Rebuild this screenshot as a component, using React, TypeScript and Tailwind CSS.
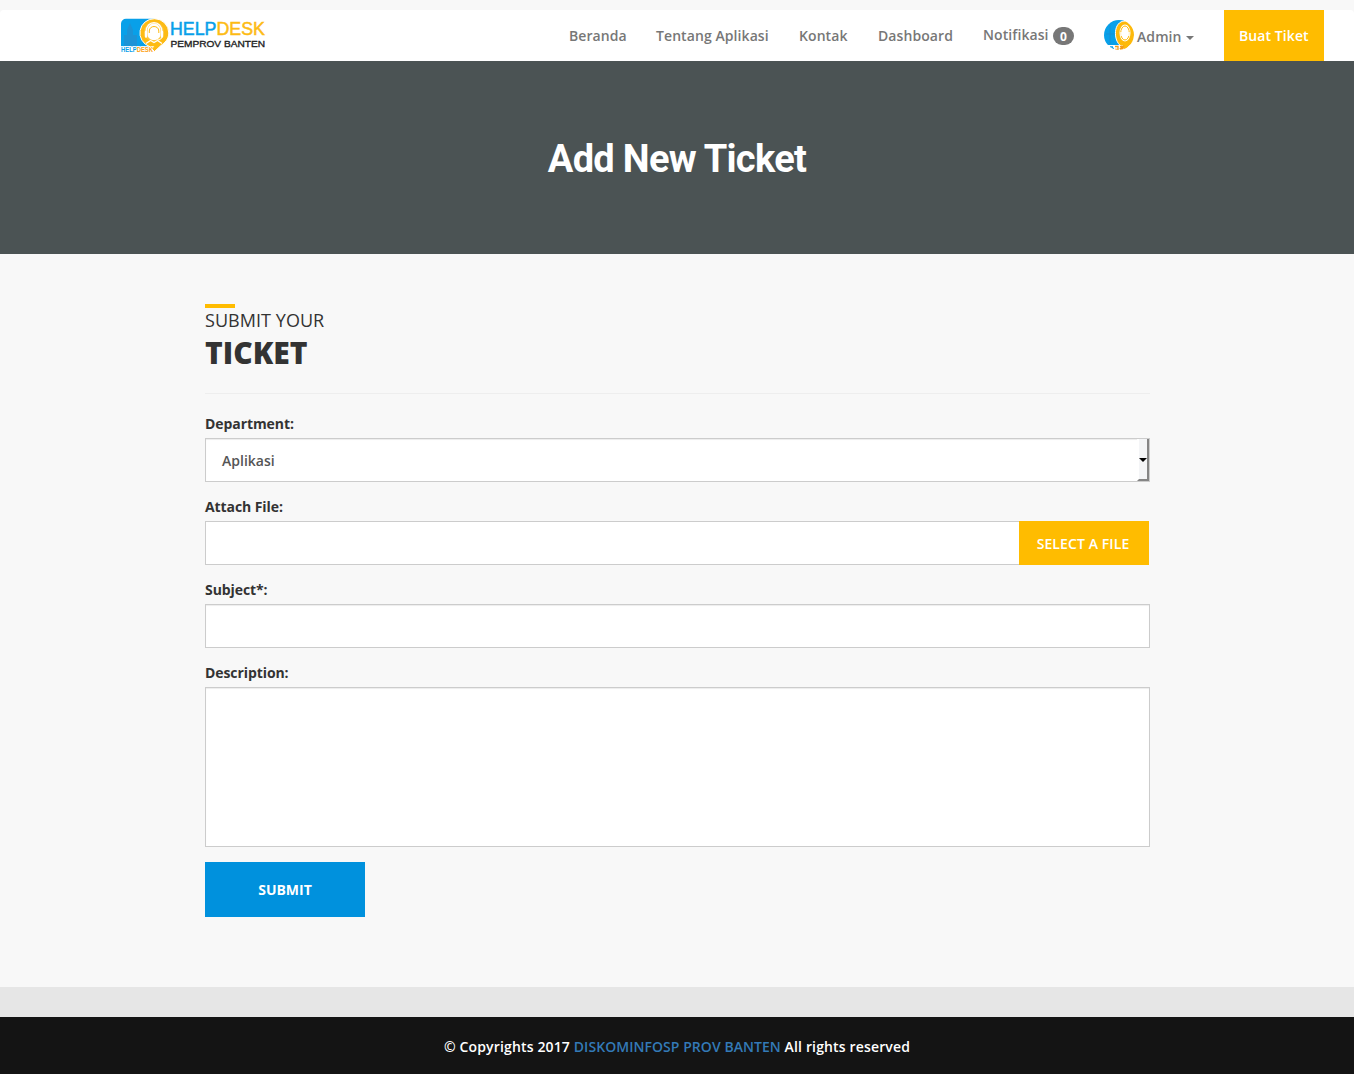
import React from 'react';

function Emblem() {
  return (
    <>
      <path d="M5 .7h28v27.800H0V5.700a5 5 0 0 1 5-5Z" fill="#08a0e9" />
      <path d="M3 28V17h3v-5l3-7 3 7v5h4v11" fill="#1c93d6" />
      <path d="M33.500 .7a14.300 14.300 0 0 1 14.300 14.300c0 6-4 10-7.800 12.500l-6.500 6-5-5A14.300 14.300 0 0 1 33.500 .7Z" fill="#fdbb14" stroke="#fff" strokeWidth="1" />
      <circle cx="33" cy="13.800" r="10" fill="#fdc63c" />
      <path d="M26.500 16v-3c0-10 13-10 13 0v3c0 8-13 8-13 0Z" fill="#fff" />
      <path d="M25 14c0-12.500 16-12.500 16 0" fill="none" stroke="#fff" strokeWidth="1.300" />
      <path d="M28.300 15v-2c0-6 9.500-6 9.500 0v2" fill="none" stroke="#fdbb14" strokeWidth="1" />
      <path d="M25 14v4.500M41 14v4.500" stroke="#fff" strokeWidth="2.400" strokeLinecap="round" />
      <path d="M41 18c0 3-2 4-5 4" fill="none" stroke="#fff" strokeWidth="1" />
      <path d="M25 25.500l4.500-3 3.500 2 3.500-2 4.500 3" fill="none" stroke="#fff" strokeWidth="1.300" />
    </>
  );
}

function Logo() {
  return (
    <svg width="146" height="37" viewBox="0 0 146 37" className="block overflow-visible" aria-label="Helpdesk Pemprov Banten">
      <Emblem />
      <g fontFamily="'Liberation Sans', Arial, sans-serif">
        <text x="0" y="34" fontSize="6.300" fontWeight="700" textLength="32" lengthAdjust="spacingAndGlyphs" fill="#08a0e9" stroke="#fff" strokeWidth="1.500" paintOrder="stroke">
          HELP<tspan fill="#fd9f14">DESK</tspan>
        </text>
        <g transform="translate(49 17.300) scale(1.100 1)">
          <text x="0" y="0" fontSize="17.500" textLength="86.300" lengthAdjust="spacingAndGlyphs" fill="#08a0e9" stroke="#08a0e9" strokeWidth=".5">
            HELP<tspan fill="#fdbb14" stroke="#fdbb14">DESK</tspan>
          </text>
        </g>
        <text x="49.500" y="29.200" fontSize="9.800" textLength="94.500" lengthAdjust="spacingAndGlyphs" fill="#222" stroke="#222" strokeWidth=".35">
          PEMPROV BANTEN
        </text>
      </g>
    </svg>
  );
}

function Avatar() {
  return (
    <svg width="30" height="30" viewBox="0 0 30 30" className="block">
      <defs>
        <clipPath id="avatar-circle"><circle cx="15" cy="15" r="15" /></clipPath>
      </defs>
      <g clipPath="url(#avatar-circle)">
        <rect width="30" height="30" fill="#fff" />
        <path d="M0 0h20v25H0Z" fill="#08a0e9" />
        <path d="M2 14h10M6 5v20" stroke="#1691d4" />
        <path d="M21 1c12 0 12 20 4 25l-4 4-4-4C9 21 9 1 21 1Z" fill="#fdb90a" stroke="#fff" />
        <ellipse cx="21" cy="13" rx="5.500" ry="8.500" fill="#fff" />
        <ellipse cx="21" cy="13" rx="4.300" ry="7" fill="none" stroke="#fdb90a" strokeWidth="1" />
        <path d="M17 12v4M25 12v4" stroke="#fff" strokeWidth="1.500" />
        <path d="M0 25.500h19V30H0Z" fill="#fff" />
        <path d="M6 27h3M8 28.500h2" stroke="#08a0e9" strokeWidth="1.500" />
        <path d="M11 26.500h3v3h-3m5-3h3l-2 1.500h2v1h-3" fill="none" stroke="#f59b18" strokeWidth="1.300" />
      </g>
    </svg>
  );
}

const input = 'block w-full border border-[#ccc] bg-white shadow-[inset_0_1px_1px_rgba(0,0,0,0.075)] outline-none';

function Field({ label, children }: { label: string; children: React.ReactNode }) {
  return (
    <div className="mb-[15px]">
      <div className="mb-[5px] h-[19px] text-[14px] leading-[19px] font-bold tracking-[-0.08px] text-[#333]">{label}</div>
      {children}
    </div>
  );
}

export default function App() {
  return (
    <div className="flex h-[1074px] flex-col bg-[#f8f8f8] pt-[10px] font-['Open_Sans',sans-serif]">
      <header className="flex h-[51px] shrink-0 justify-between rounded-t bg-white pr-[30px] pl-[121px]">
        <div className="pt-[8px]"><Logo /></div>
        <nav className="flex text-[14px] leading-[51px] font-semibold tracking-[0.08px] whitespace-nowrap text-[#777]">
          <a className="w-[87px] text-left">Beranda</a>
          <a className="w-[143px]">Tentang Aplikasi</a>
          <a className="w-[79px]">Kontak</a>
          <a className="w-[105px]">Dashboard</a>
          <a className="flex w-[121px] gap-1">
            <span className="w-[66px] leading-[50px]">Notifikasi</span>
            <span className="mt-[17px] h-[18px] w-[21px] rounded-[10px] bg-[#777] text-center text-[12px] leading-[19px] font-bold text-white">0</span>
          </a>
          <a className="flex w-[120px]">
            <span className="mt-[10px] mr-[3px]"><Avatar /></span>
            <span className="w-[44px] leading-[53px]">Admin</span>
            <span className="mt-[26px] ml-[5px] h-0 border-x-4 border-t-4 border-x-transparent border-t-[#777]" />
          </a>
          <a className="w-[100px] bg-[#ffbc00] pl-[15px] text-white">Buat Tiket</a>
        </nav>
      </header>

      <section className="flex h-[193px] shrink-0 items-center justify-center bg-[#4b5354] pt-[2px]">
        <h1 className="font-[Roboto,sans-serif] text-[38px] leading-[42px] font-bold tracking-[-0.7px] text-white">Add New Ticket</h1>
      </section>

      <main className="ml-[205px] h-[733px] w-[945px] shrink-0 pt-[50px]">
        <div className="h-1 w-[30px] bg-[#ffbc00]" />
        <h2 className="text-[#333]">
          <span className="block text-[18px] leading-[25px] tracking-[0.05px]">SUBMIT YOUR</span>
          <span className="block pt-px text-[30px] leading-[38px] font-extrabold">TICKET</span>
        </h2>
        <hr className="mt-[21px] mb-[20px] border-[#eee]" />

        <Field label="Department:">
          <div className={`${input} flex h-[44px] justify-between`}>
            <span className="pl-[16px] text-[14px] leading-[44px] font-semibold text-[#555]">Aplikasi</span>
            <span className="flex w-[12px] items-center justify-center border-r-2 border-b-2 border-l-2 border-r-[#858585] border-b-[#858585] border-l-white bg-[#f4f5f7] pt-px">
              <span className="-mx-px border-x-[4px] border-t-4 border-x-transparent border-t-black" />
            </span>
          </div>
        </Field>
        <Field label="Attach File:">
          <div className="flex h-[44px] pr-px">
            <input className="block min-w-0 flex-1 border border-r-0 border-[#ccc] bg-white outline-none" />
            <button className="w-[130px] bg-[#ffbc00] pr-[2px] pt-px text-[14px] font-semibold tracking-[0.1px] text-white">SELECT A FILE</button>
          </div>
        </Field>
        <Field label="Subject*:">
          <input className={`${input} h-[44px]`} />
        </Field>
        <Field label="Description:">
          <textarea className={`${input} h-[160px] resize-none`} />
        </Field>
        <button className="block h-[55px] w-[160px] bg-[#0091dd] text-[14px] font-bold text-white">SUBMIT</button>
      </main>

      <footer className="shrink-0">
        <div className="h-[30px] bg-[#e6e6e6]" />
        <div className="h-[57px] bg-[#141414] text-center text-[14px] leading-[59px] font-semibold tracking-[0.15px] text-white">
          © Copyrights 2017 <a className="tracking-[0.05px] text-[#337ab7]">DISKOMINFOSP PROV BANTEN</a> All rights reserved
        </div>
      </footer>
    </div>
  );
}
